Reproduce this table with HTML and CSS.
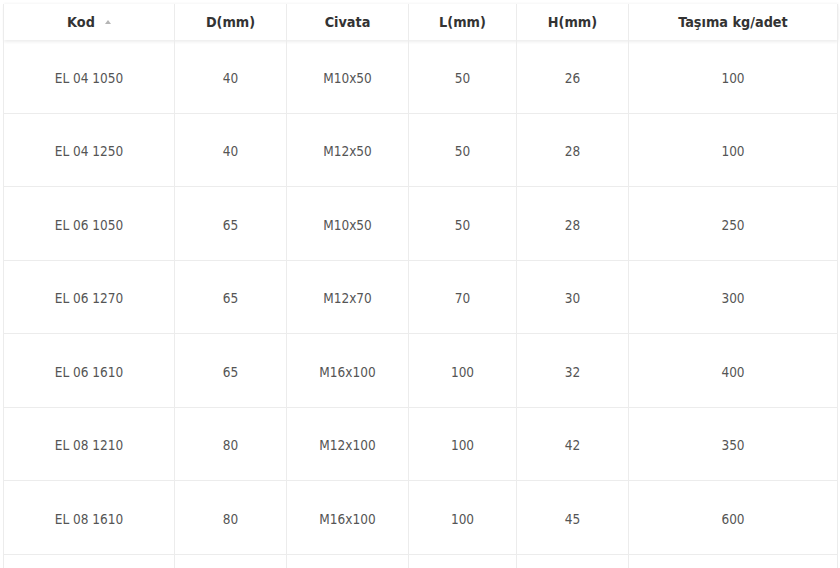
FILE: index.html
```
<!DOCTYPE html>
<html lang="tr">
<head>
<meta charset="utf-8">
<link rel="stylesheet" href="styles.css">
</head>
<body>
<div class="wrap">
<table class="spec">
<colgroup>
<col class="c1"><col class="c2"><col class="c3"><col class="c4"><col class="c5"><col class="c6">
</colgroup>
<thead>
<tr>
<th><span class="sorted">Kod</span></th>
<th>D(mm)</th>
<th>Civata</th>
<th>L(mm)</th>
<th>H(mm)</th>
<th>Taşıma kg/adet</th>
</tr>
</thead>
<tbody>
<tr><td>EL 04 1050</td><td>40</td><td>M10x50</td><td>50</td><td>26</td><td>100</td></tr>
<tr><td>EL 04 1250</td><td>40</td><td>M12x50</td><td>50</td><td>28</td><td>100</td></tr>
<tr><td>EL 06 1050</td><td>65</td><td>M10x50</td><td>50</td><td>28</td><td>250</td></tr>
<tr><td>EL 06 1270</td><td>65</td><td>M12x70</td><td>70</td><td>30</td><td>300</td></tr>
<tr><td>EL 06 1610</td><td>65</td><td>M16x100</td><td>100</td><td>32</td><td>400</td></tr>
<tr><td>EL 08 1210</td><td>80</td><td>M12x100</td><td>100</td><td>42</td><td>350</td></tr>
<tr><td>EL 08 1610</td><td>80</td><td>M16x100</td><td>100</td><td>45</td><td>600</td></tr>
<tr class="next"><td></td><td></td><td></td><td></td><td></td><td></td></tr>
</tbody>
</table>
</div>
</body>
</html>
```
FILE: styles.css
```
html, body {
  margin: 0;
  padding: 0;
  background: #fff;
}
.wrap {
  padding: 4px 3px 0 3px;
}
.spec {
  width: 834px;
  border-collapse: collapse;
  table-layout: fixed;
  font-family: Tahoma, "DejaVu Sans Condensed", "DejaVu Sans", sans-serif;
  font-size: 13.5px;
  color: #555;
}
.c1 { width: 171px; }
.c2 { width: 112px; }
.c3 { width: 122px; }
.c4 { width: 108px; }
.c5 { width: 112px; }
.c6 { width: 209px; }
.spec thead tr {
  box-shadow: 0 2px 3px rgba(0, 0, 0, 0.07), 0 -1px 2px rgba(0, 0, 0, 0.04);
}
.spec th {
  height: 36px;
  padding: 0 8px;
  font-size: 14.3px;
  font-weight: bold;
  color: #333;
  text-align: center;
  border-left: 1px solid #ececec;
  border-right: 1px solid #ececec;
}
.spec td {
  height: 69.5px;
  padding: 3px 8px 0 8px;
  text-align: center;
  vertical-align: middle;
  border: 1px solid #ececec;
}
.spec tbody tr:first-child td {
  border-top: none;
}
.sorted::after {
  content: "";
  display: inline-block;
  vertical-align: middle;
  margin-left: 10px;
  margin-top: -2px;
  width: 0;
  height: 0;
  border-left: 3.5px solid transparent;
  border-right: 3.5px solid transparent;
  border-bottom: 4px solid #b5b5b5;
}
```
